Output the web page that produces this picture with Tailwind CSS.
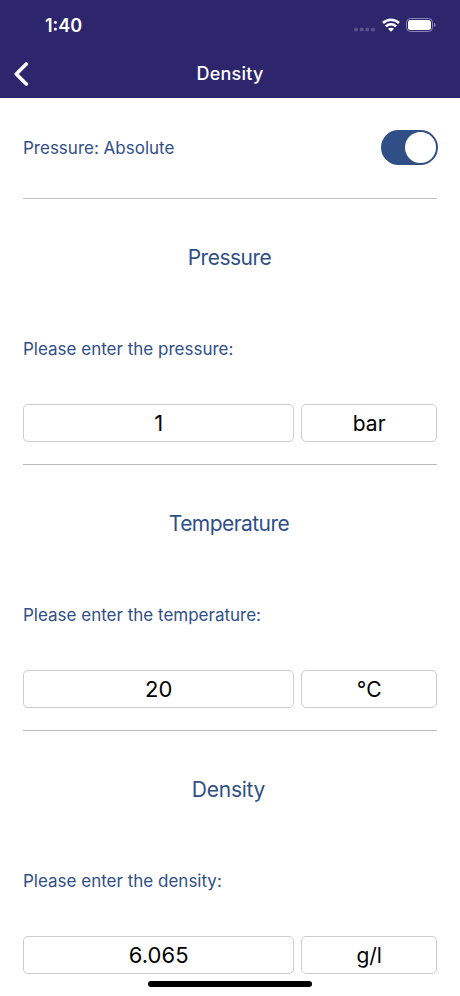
<!DOCTYPE html>
<html lang="en">
<head>
    <meta charset="UTF-8">
    <meta name="viewport" content="width=device-width, initial-scale=1.0">
    <title>Density</title>
    <script src="https://cdn.jsdelivr.net/npm/@tailwindcss/browser@4"></script>
</head>
<body class="bg-white h-[996px] overflow-hidden font-['Inter',sans-serif] text-[#304f87]">
    <header class="bg-[#2e266d] h-[98px] text-white">
        <!-- Status bar -->
        <div class="h-[50px] pl-[45px] pr-[24px] flex items-center justify-between">
            <span class="pt-px text-[18px] font-semibold">1:40</span>
            <div class="flex items-center gap-[6px]">
                <svg class="mt-[9px]" width="22" height="5" viewBox="0 0 22 5" fill="#59528b">
                    <circle cx="2" cy="2.500" r="2"/>
                    <circle cx="7.700" cy="2.500" r="2"/>
                    <circle cx="13.400" cy="2.500" r="2"/>
                    <circle cx="19" cy="2.500" r="2"/>
                </svg>
                <svg width="18" height="14" viewBox="0 0 18 14" fill="none" stroke="#fff" stroke-width="2.6">
                    <path d="M1 5C5.500.6 12.500.6 17 5M3.900 8.400c2.900-2.800 7.300-2.800 10.200 0"/>
                    <path d="M9 13.800 6 10.800c1.700-1.500 4.300-1.500 6 0z" fill="#fff" stroke="none"/>
                </svg>
                <svg width="30" height="14" viewBox="0 0 30 14">
                    <rect x=".5" y=".5" width="26" height="13" rx="4" fill="none" stroke="#8d88b4"/>
                    <rect x="2" y="2" width="23" height="10" rx="2.500" fill="#fff"/>
                    <path d="M28 5c2 .6 2 3.400 0 4z" fill="#8d88b4"/>
                </svg>
            </div>
        </div>
        <div class="h-[48px] px-[14px] grid grid-cols-[1fr_auto_1fr] items-center">
            <svg width="15" height="24" viewBox="0 0 15 24" fill="none" stroke="#fff" stroke-width="3.6" stroke-linecap="round" stroke-linejoin="round">
                <path d="M12.300 2 2.300 12l10 10"/>
            </svg>
            <h1 class="pb-[2px] text-[18px] tracking-[0.2px] font-medium">Density</h1>
        </div>
    </header>

    <main class="px-[23px]">
        <div class="h-[101px] border-b border-[#bcbcbc] flex items-center justify-between">
            <span class="pt-px text-[17px]">Pressure: Absolute</span>
            <div class="w-[57px] h-[35px] -mt-[2px] -mr-px rounded-full bg-[#304f87] p-[2px] flex justify-end">
                <div class="size-[31px] rounded-full bg-white"></div>
            </div>
        </div>

        <section class="h-[266px] border-b border-[#bcbcbc]">
            <h2 class="h-[118px] pr-px flex items-center justify-center text-[21px] tracking-[-0.5px]">Pressure</h2>
            <p class="h-[65px] flex items-center text-[17px]">Please enter the pressure:</p>
            <div class="mt-[22px] flex gap-[7px] text-black">
                <div class="w-[272px] h-[38px] pt-px rounded-[5px] border border-[#ccc] flex items-center justify-center text-[22px]">1</div>
                <div class="w-[136px] h-[38px] pt-px rounded-[5px] border border-[#ccc] flex items-center justify-center text-[21px]">bar</div>
            </div>
        </section>

        <section class="h-[266px] border-b border-[#bcbcbc]">
            <h2 class="h-[118px] pr-[2px] flex items-center justify-center text-[21px] tracking-[-0.55px]">Temperature</h2>
            <p class="h-[65px] flex items-center text-[17px]">Please enter the temperature:</p>
            <div class="mt-[22px] flex gap-[7px] text-black">
                <div class="w-[272px] h-[38px] pt-px rounded-[5px] border border-[#ccc] flex items-center justify-center text-[22px]">20</div>
                <div class="w-[136px] h-[38px] pt-px rounded-[5px] border border-[#ccc] flex items-center justify-center text-[21px]">°C</div>
            </div>
        </section>

        <section class="h-[266px]">
            <h2 class="h-[118px] pr-[3px] flex items-center justify-center text-[21px] tracking-[-0.25px]">Density</h2>
            <p class="h-[65px] flex items-center text-[17px]">Please enter the density:</p>
            <div class="mt-[22px] flex gap-[7px] text-black">
                <div class="w-[272px] h-[38px] pt-px rounded-[5px] border border-[#ccc] flex items-center justify-center text-[22px] tracking-[0.1px]">6.065</div>
                <div class="w-[136px] h-[38px] pt-px rounded-[5px] border border-[#ccc] flex items-center justify-center text-[21px]">g/l</div>
            </div>
        </section>
    </main>

    <!-- Home indicator -->
    <div class="fixed bottom-[9px] left-[148px] w-[164px] h-[6px] rounded-full bg-black"></div>
</body>
</html>
